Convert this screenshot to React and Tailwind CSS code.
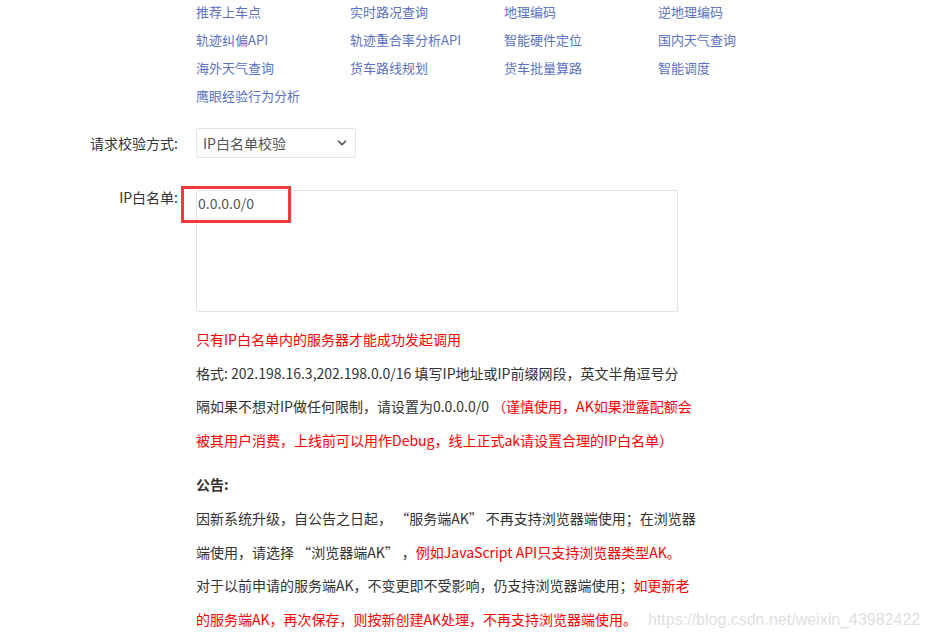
import { ChevronDown } from "lucide-react";

const LINKS = [
  "推荐上车点", "实时路况查询", "地理编码", "逆地理编码",
  "轨迹纠偏API", "轨迹重合率分析API", "智能硬件定位", "国内天气查询",
  "海外天气查询", "货车路线规划", "货车批量算路", "智能调度",
  "鹰眼经验行为分析",
];

const font = { fontFamily: '"Noto Sans CJK SC", "Noto Sans", sans-serif' };

function Label({ children, className = "" }) {
  return (
    <div className={`w-[178px] shrink-0 text-right text-[14px] text-[#333] ${className}`}>
      {children}
    </div>
  );
}

export default function App() {
  return (
    <div className="relative w-[930px] h-[639px] overflow-hidden bg-white" style={font}>
      {/* service links */}
      <div className="ml-[196px] -mt-[2px] grid grid-cols-[154px_154px_154px_154px] text-[13px] leading-[28px] text-[#5b72c4]">
        {LINKS.map((l) => (
          <a key={l} className="whitespace-nowrap cursor-pointer">{l}</a>
        ))}
      </div>

      {/* verify method */}
      <div className="mt-[18px] flex items-center">
        <Label>请求校验方式:</Label>
        <div className="ml-[18px] flex h-[30px] w-[160px] items-center justify-between rounded-[2px] border border-[#e2e5eb] pl-[6px] pr-[6px] text-[14px] text-[#555]">
          <span>IP白名单校验</span>
          <ChevronDown size={14} strokeWidth={3} className="text-[#555]" />
        </div>
      </div>

      {/* ip whitelist */}
      <div className="mt-[32px] flex">
        <Label className="-mt-[3px] leading-[20px]">IP白名单:</Label>
        <div className="relative ml-[18px]">
          <div className="h-[122px] w-[482px] rounded-[2px] border border-[#dfe3ea] pl-[1px] pt-[1px] text-[14px] leading-[22px] text-[#555]">
            0.0.0.0/0
          </div>
          <div className="absolute -left-[15px] -top-[4px] h-[37px] w-[110px] border-[3px] border-[#f23a3a]" />
        </div>
      </div>

      {/* notes */}
      <div className="ml-[196px] mt-[11px] text-[14px] leading-[33.6px] text-[#333] whitespace-nowrap">
        <div className="text-[#ff0000]">只有IP白名单内的服务器才能成功发起调用</div>
        <div>格式: 202.198.16.3,202.198.0.0/16 填写IP地址或IP前缀网段，英文半角逗号分</div>
        <div>
          隔如果不想对IP做任何限制，请设置为0.0.0.0/0{" "}
          <span className="text-[#ff0000]">（谨慎使用，AK如果泄露配额会</span>
        </div>
        <div className="text-[#ff0000]">被其用户消费，上线前可以用作Debug，线上正式ak请设置合理的IP白名单）</div>

        <div className="mt-[11px] font-bold">公告:</div>
        <div>因新系统升级，自公告之日起， “服务端AK” 不再支持浏览器端使用；在浏览器</div>
        <div>
          端使用，请选择 “浏览器端AK” ，
          <span className="text-[#ff0000]">例如JavaScript API只支持浏览器类型AK。</span>
        </div>
        <div>
          对于以前申请的服务端AK，不变更即不受影响，仍支持浏览器端使用；
          <span className="text-[#ff0000]">如更新老</span>
        </div>
        <div className="text-[#ff0000]">的服务端AK，再次保存，则按新创建AK处理，不再支持浏览器端使用。</div>
      </div>

      {/* watermark */}
      <div
        className="absolute left-[648px] top-[608px] text-[16px] leading-[24px] text-[#e0e0e0]"
        style={{ fontFamily: '"Liberation Sans", Arial, sans-serif' }}
      >
        https://blog.csdn.net/weixin_43982422
      </div>
    </div>
  );
}
